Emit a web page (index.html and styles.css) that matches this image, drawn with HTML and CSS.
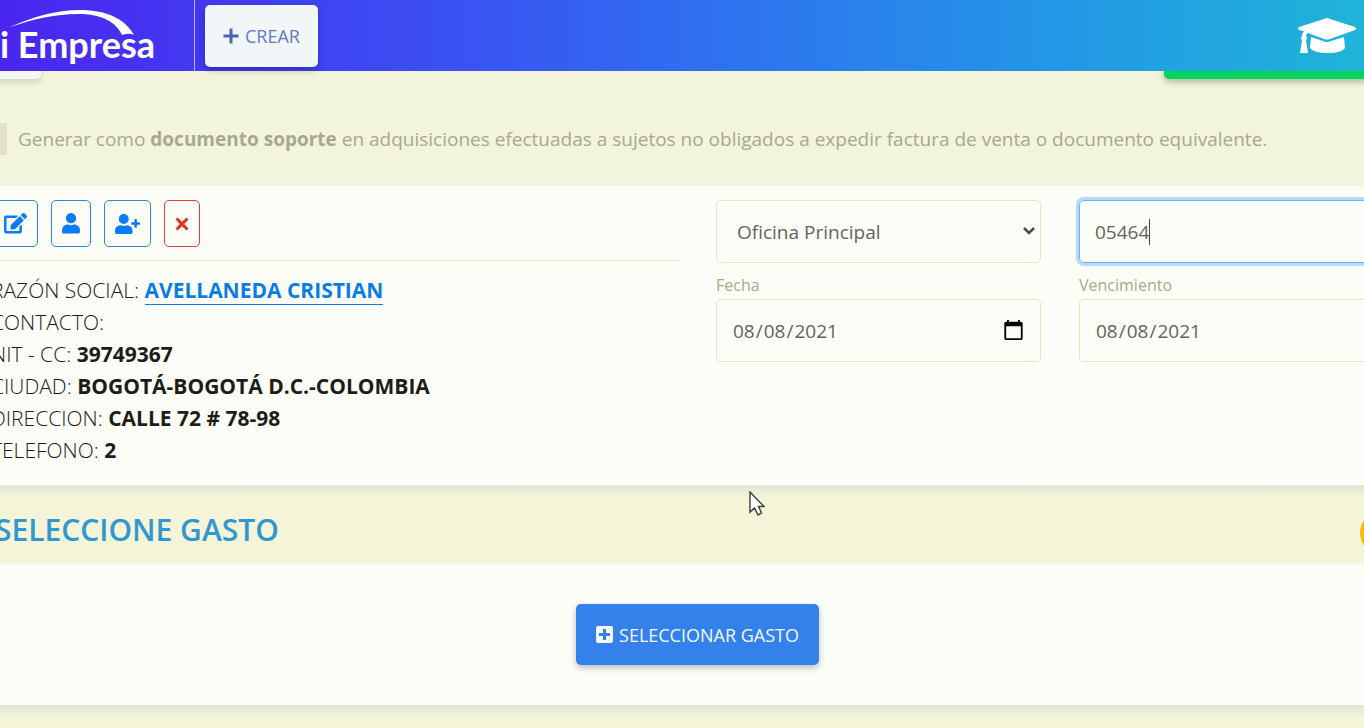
FILE: index.html
```
<!DOCTYPE html>
<html lang="es">
<head>
	<meta charset="UTF-8">
	<meta name="viewport" content="width=device-width, initial-scale=1.0">
	<title>Mi Empresa - Gastos</title>
	<link rel="stylesheet" href="styles.css">
</head>
<body>
<header class="topbar">
	<a href="#" class="logo">
		<svg class="logo-arc" viewBox="0 0 124 26" aria-hidden="true">
			<path d="M0 17C22 7 46 0 70 0C97 0 115 9 124 25C120 23 116 24 112 25C106 12 92 4 68 4C46 4 24 9 0 17Z"/>
		</svg>
		<span class="logo-text">Mi Empresa</span>
	</a>
	<button type="button" class="btn btn-crear">
		<svg class="icon-plus" viewBox="0 0 16 16" aria-hidden="true"><path d="M6.500 0.500h3v6h6v3h-6v6h-3v-6h-6v-3h6z"/></svg>
		CREAR
	</button>
	<a href="#" class="tutorial" aria-label="Tutoriales">
		<svg viewBox="0 0 58 36" aria-hidden="true">
			<path d="M29 0Q30 0 32 1L57 9Q59 11 57 12L32 21Q29 22 26 21L10 15Q8 16 8 18Q10 20 8 22L10 35H2L4 22Q2 20 4 18Q4 15 6 13L1 12Q-1 11 1 9L26 1Q28 0 29 0Z"/>
			<path d="M13 19L25 23Q29 25 33 23L46 19L47 30Q44 35 30 35Q15 35 12 30Z"/>
		</svg>
	</a>
</header>

<main class="page">
	<div class="toolbar">
		<button type="button" class="btn btn-back" aria-label="Volver"></button>
		<button type="button" class="btn btn-save" aria-label="Guardar"></button>
	</div>

	<div class="soporte">
		<input type="checkbox" id="soporte" class="soporte-check">
		<label for="soporte">Generar como <b>documento soporte</b> en adquisiciones efectuadas a sujetos no obligados a expedir factura de venta o documento equivalente.</label>
	</div>

	<section class="card datos">
		<div class="proveedor">
			<div class="acciones">
				<button type="button" class="btn-outline" aria-label="Editar">
					<svg class="icon-edit" viewBox="0 0 576 512" aria-hidden="true"><path d="M402.600 83.200l90.200 90.200c3.800 3.800 3.800 10 0 13.800L274.400 405.600l-92.800 10.300c-12.400 1.400-22.900-9.100-21.500-21.500l10.300-92.800L388.800 83.200c3.800-3.800 10-3.800 13.800 0zm162-22.900l-48.800-48.800c-15.200-15.200-39.900-15.200-55.200 0l-35.400 35.400c-3.800 3.800-3.800 10 0 13.800l90.200 90.200c3.800 3.800 10 3.800 13.800 0l35.400-35.400c15.200-15.300 15.200-40 0-55.200zM384 346.200V448H64V128h229.800c3.200 0 6.200-1.300 8.500-3.500l40-40c7.600-7.600 2.200-20.500-8.500-20.500H48C21.500 64 0 85.500 0 112v352c0 26.500 21.500 48 48 48h352c26.500 0 48-21.500 48-48V306.200c0-10.700-12.900-16-20.500-8.500l-40 40c-2.200 2.300-3.500 5.300-3.500 8.500z"/></svg>
				</button>
				<button type="button" class="btn-outline" aria-label="Ver tercero">
					<svg class="icon-user" viewBox="0 0 448 512" aria-hidden="true"><path d="M224 256a128 128 0 1 0 0-256 128 128 0 0 0 0 256zm90 32h-17a174 174 0 0 1-146 0h-17A134 134 0 0 0 0 422v42a48 48 0 0 0 48 48h352a48 48 0 0 0 48-48v-42a134 134 0 0 0-134-134z"/></svg>
				</button>
				<button type="button" class="btn-outline" aria-label="Nuevo tercero">
					<svg class="icon-user-plus" viewBox="0 0 640 512" aria-hidden="true"><path d="M624 208h-64v-64c0-9-7-16-16-16h-32c-9 0-16 7-16 16v64h-64c-9 0-16 7-16 16v32c0 9 7 16 16 16h64v64c0 9 7 16 16 16h32c9 0 16-7 16-16v-64h64c9 0 16-7 16-16v-32c0-9-7-16-16-16zM224 256a128 128 0 1 0 0-256 128 128 0 0 0 0 256zm90 32h-17a174 174 0 0 1-146 0h-17A134 134 0 0 0 0 422v42a48 48 0 0 0 48 48h352a48 48 0 0 0 48-48v-42a134 134 0 0 0-134-134z"/></svg>
				</button>
				<button type="button" class="btn-outline btn-quitar" aria-label="Quitar">
					<svg class="icon-times" viewBox="0 0 14 14" aria-hidden="true"><path d="M2.500 0.500L7 4.800L11.500 0.500L13.500 2.500L9.200 7L13.500 11.500L11.500 13.500L7 9.200L2.500 13.500L0.500 11.500L4.800 7L0.500 2.500Z"/></svg>
				</button>
			</div>
			<ul class="info">
				<li>RAZÓN SOCIAL: <a href="#">AVELLANEDA CRISTIAN</a></li>
				<li>CONTACTO:</li>
				<li>NIT - CC: <b>39749367</b></li>
				<li>CIUDAD: <b>BOGOTÁ-BOGOTÁ D.C.-COLOMBIA</b></li>
				<li>DIRECCION: <b>CALLE 72 # 78-98</b></li>
				<li>TELEFONO: <b>2</b></li>
			</ul>
		</div>
		<form class="campos">
			<div class="caja">
				<select class="control control-select" aria-label="Oficina">
					<option>Oficina Principal</option>
				</select>
				<svg class="flecha" viewBox="0 0 12 8" aria-hidden="true"><path d="M1 1L6 6L11 1"/></svg>
			</div>
			<div class="caja">
				<input type="text" class="control control-numero" value="05464" id="numero" aria-label="Número" autocomplete="off">
				<span class="caret"></span>
			</div>
			<div class="campo">
				<label for="fecha">Fecha</label>
				<input type="date" class="control" id="fecha" value="2021-08-08">
			</div>
			<div class="campo">
				<label for="vencimiento">Vencimiento</label>
				<input type="date" class="control" id="vencimiento" value="2021-08-08">
			</div>
		</form>
	</section>

	<div class="titulo">
		<h2>SELECCIONE GASTO</h2>
		<button type="button" class="btn-ayuda" aria-label="Ayuda"></button>
	</div>

	<section class="card gasto">
		<button type="button" class="btn btn-gasto">
			<svg class="icon-square" viewBox="0 0 17 17" aria-hidden="true"><path fill-rule="evenodd" d="M2 0h13q2 0 2 2v13q0 2-2 2h-13q-2 0-2-2v-13q0-2 2-2zM7 3v4h-4v3h4v4h3v-4h4v-3h-4v-4z"/></svg>
			SELECCIONAR GASTO
		</button>
	</section>
	<div class="pie"></div>
</main>

<svg class="cursor" viewBox="0 0 16 25" aria-hidden="true"><path d="M1 1V21L5.500 17L9 24L12.500 22L9.500 15.500H15Z"/></svg>

<script>
	document.getElementById("numero").focus();
</script>
</body>
</html>
```
FILE: styles.css
```
* {
	box-sizing: border-box;
}
body {
	margin: 0;
	min-height: 100vh;
	overflow: hidden;
	font-family: "Open Sans", "Noto Sans", sans-serif;
	font-size: 19px;
	color: #1c1c18;
	background: #f3f4dc;
}
button, input, select {
	font-family: inherit;
	font-size: inherit;
}
svg {
	display: block;
	fill: currentColor;
}

/* top bar */
.topbar {
	position: relative;
	z-index: 2;
	display: flex;
	align-items: center;
	height: 71px;
	padding-right: 8px;
	background: linear-gradient(to right, #4a26f0, #3c4cf2 30%, #2f70f0 52%, #2396e6 77%, #1fb4d8);
}
.logo {
	position: relative;
	display: flex;
	justify-content: flex-end;
	align-items: center;
	width: 195px;
	height: 100%;
	padding: 16px 39px 0 0;
	overflow: hidden;
	border-right: 1px solid #b9b8f4;
	color: #fff;
	text-decoration: none;
	white-space: nowrap;
}
.logo-text {
	font-family: Lato, sans-serif;
	font-size: 36px;
	font-weight: 700;
	line-height: 40px;
}
.logo-arc {
	position: absolute;
	top: 10px;
	left: 10px;
	width: 124px;
}
.btn {
	display: flex;
	align-items: center;
	border: 0;
	border-radius: 5px;
	box-shadow: 0 3px 6px rgba(0, 0, 0, 0.25);
	cursor: pointer;
}
.btn-crear {
	gap: 6px;
	height: 62px;
	margin-left: 10px;
	padding: 0 18px;
	font-size: 18px;
	color: #5f7cc4;
	background: #f1f6f8;
}
.icon-plus {
	width: 16px;
	color: #4666bd;
}
.tutorial {
	margin-left: auto;
	color: #fff;
}
.tutorial svg {
	width: 58px;
}

/* the content is wider than the window on both sides */
.page {
	margin: 0 -40px 0 -9px;
}
.toolbar {
	display: flex;
	justify-content: space-between;
	margin-top: -54px;
}
.btn-back,
.btn-save {
	height: 62px;
}
.btn-back {
	width: 50px;
	background: #f4f8f6;
	box-shadow: 0 3px 6px rgba(0, 0, 0, 0.15);
}
.btn-save {
	width: 240px;
	background: #07d45c;
}
.soporte {
	display: flex;
	align-items: center;
	gap: 11px;
	height: 107px;
	padding: 12px 0 0;
	color: #a8a890;
	white-space: nowrap;
}
.soporte-check {
	appearance: none;
	width: 16px;
	height: 32px;
	margin: 0;
	background: #e2e2c8;
}
.card {
	background: #fdfdf8;
}
.datos {
	display: grid;
	grid-template-columns: 1fr 1fr;
	gap: 37px;
	padding: 14px 0 19px;
}
.acciones {
	display: flex;
	gap: 13px;
	height: 61px;
	border-bottom: 1px solid #e6e6bc;
}
.btn-outline {
	display: flex;
	align-items: center;
	height: 47px;
	padding: 0 10px;
	border: 1px solid #2a86e0;
	border-radius: 5px;
	color: #0a7cf5;
	background: none;
	cursor: pointer;
}
.btn-quitar {
	border-color: #dc4040;
	color: #dc3522;
}
.icon-edit {
	width: 23px;
}
.btn-outline:first-child {
	padding-left: 12px;
}
.icon-user {
	width: 18px;
}
.icon-user-plus {
	width: 25px;
}
.icon-times {
	width: 14px;
}
.info {
	margin: 13px 0 0;
	padding: 0;
	list-style: none;
	font-size: 21px;
	font-weight: 300;
	line-height: 32px;
}
.info b,
.info a {
	font-weight: 700;
}
.info a {
	color: #0a7be6;
	text-decoration: none;
	border-bottom: 1px solid #0a7be6;
}
.campos {
	display: grid;
	grid-template-columns: 1fr 1fr;
	column-gap: 38px;
	row-gap: 12px;
	align-content: start;
}
.caja {
	position: relative;
}
.campo {
	display: flex;
	flex-direction: column;
}
.campo label {
	height: 24px;
	font-size: 16px;
	line-height: 20px;
	color: #a8a88c;
}
.control {
	display: block;
	width: 100%;
	height: 63px;
	padding: 0 15px;
	border: 1px solid #e6e6bc;
	border-radius: 5px;
	color: #63635a;
	background: transparent;
}
.control:focus {
	outline: none;
	border-color: #6fb0ee;
	box-shadow: 0 0 0 3px #b5d9f8;
}
.control::-webkit-calendar-picker-indicator {
	width: 23px;
	height: 23px;
	padding: 0;
}
.control-select {
	appearance: none;
	padding: 0 20px;
}
.flecha {
	position: absolute;
	top: 27px;
	right: 6px;
	width: 12px;
	fill: none;
	stroke: #4a4a44;
	stroke-width: 2.500;
	pointer-events: none;
}
.control-numero {
	caret-color: transparent;
}
.caret {
	position: absolute;
	top: 19px;
	left: 70px;
	width: 1px;
	height: 26px;
	background: #444;
}

.titulo {
	display: flex;
	justify-content: space-between;
	align-items: center;
	height: 79px;
	padding: 10px 0 0 4px;
	background: linear-gradient(to bottom, #e2e5d8, #f3f4d8 12px);
}
.titulo h2 {
	margin: 0;
	font-size: 30px;
	font-weight: 600;
	color: #3297d0;
}
.btn-ayuda {
	width: 44px;
	height: 44px;
	margin-top: 6px;
	padding: 0;
	border: 0;
	border-radius: 50%;
	background: #f9bb0a;
}
.gasto {
	display: flex;
	justify-content: center;
	padding: 40px 0;
}
.btn-gasto {
	gap: 6px;
	height: 61px;
	padding: 0 20px;
	font-size: 18px;
	color: #f2f8fc;
	background: #3581ec;
}
.icon-square {
	width: 17px;
}
.pie {
	height: 40px;
	background: linear-gradient(to bottom, #e2e5d8, #f3f4d8 12px);
}

.cursor {
	position: absolute;
	left: 749px;
	top: 491px;
	width: 16px;
	fill: #fff;
	stroke: #444;
	stroke-width: 1.500;
}
```
